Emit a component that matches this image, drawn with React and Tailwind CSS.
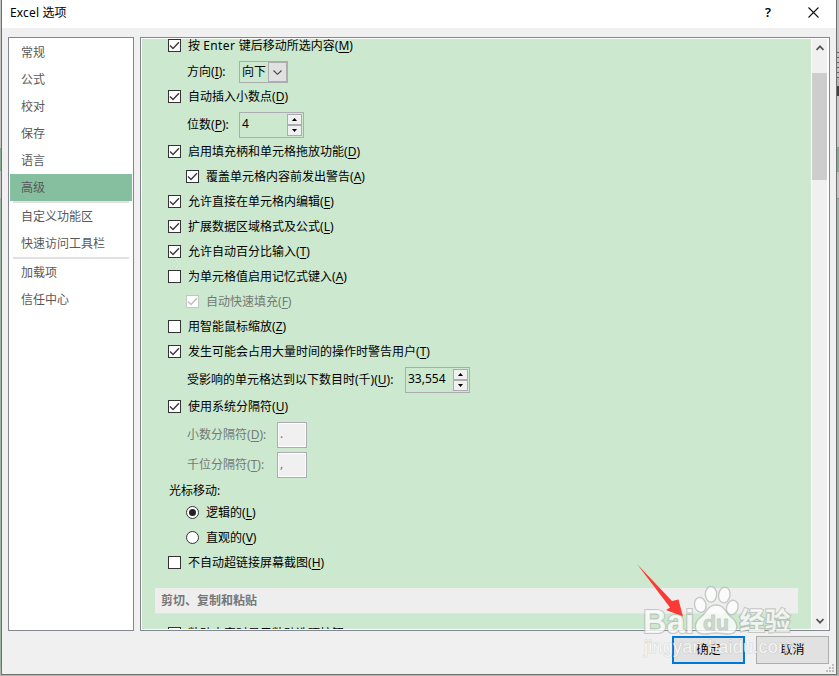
import React, { useState } from 'react';

const navItems = [
    { id: 'general', label: '常规' },
    { id: 'formulas', label: '公式' },
    { id: 'proofing', label: '校对' },
    { id: 'save', label: '保存' },
    { id: 'language', label: '语言' },
    { id: 'advanced', label: '高级' },
    { id: 'div' },
    { id: 'ribbon', label: '自定义功能区' },
    { id: 'qat', label: '快速访问工具栏' },
    { id: 'div' },
    { id: 'addins', label: '加载项' },
    { id: 'trust', label: '信任中心' },
];

// label text followed by its underlined access key, e.g. 方向(I):
function Label({ text, hot, tail = '' }) {
    return (
        <span className="whitespace-pre">
            {text}({<span className="underline underline-offset-2">{hot}</span>}){tail}
        </span>
    );
}

function Check({ text, hot, on = true, indent, disabled }) {
    const [checked, setChecked] = useState(on);
    return (
        <div className={`flex h-[25px] shrink-0 items-center gap-[7px] ${indent ? 'pl-[44px]' : 'pl-[26px]'} ${disabled ? 'text-[#737a74]' : ''}`}>
            <button
                disabled={disabled}
                onClick={() => setChecked(!checked)}
                className={`h-[13px] w-[13px] shrink-0 border bg-white ${disabled ? 'border-[#c4c8c4]' : 'border-[#333]'}`}
            >
                {checked && (
                    <svg viewBox="0 0 11 11" className="block h-[11px] w-[11px]" fill="none" stroke={disabled ? '#bdbdbd' : '#3a3a3a'} strokeWidth="1.4">
                        <path d="M1 5.6 L4 8.5 L10 2.2" />
                    </svg>
                )}
            </button>
            <Label text={text} hot={hot} />
        </div>
    );
}

function Radio({ text, hot, on }) {
    return (
        <div className="flex h-[25px] shrink-0 items-center gap-[7px] pl-[44px]">
            <span className="flex h-[13px] w-[13px] items-center justify-center rounded-full border border-[#333] bg-white">
                {on && <span className="h-[7px] w-[7px] rounded-full bg-[#222]" />}
            </span>
            <Label text={text} hot={hot} />
        </div>
    );
}

function Spin({ value }) {
    return (
        <div className="flex h-[26px] w-[65px] border border-[#abadb3] p-px">
            <span className="flex-1 pl-px leading-[20px]">{value}</span>
            <span className="flex w-[15px] flex-col bg-[#f0f0f0]">
                <span className="flex flex-1 items-center justify-center border border-[#acacac]">
                    <svg viewBox="0 0 5 3" className="h-[3px] w-[5px]"><path d="M2.5 0 L5 3 H0 Z" /></svg>
                </span>
                <span className="flex flex-1 items-center justify-center border border-[#acacac]">
                    <svg viewBox="0 0 5 3" className="h-[3px] w-[5px]"><path d="M0 0 H5 L2.5 3 Z" /></svg>
                </span>
            </span>
        </div>
    );
}

function Separator({ text, hot, value }) {
    return (
        <div className="flex h-[30px] shrink-0 pt-[3px] pl-[45px] text-[#737a74]">
            <span className="w-[90px] leading-[26px]"><Label text={text} hot={hot} tail=":" /></span>
            <span className="h-[26px] w-[30px] border border-[#abadb3] bg-white p-px">
                <span className="block h-full bg-[#f0f0f0] pl-px leading-[20px]">{value}</span>
            </span>
        </div>
    );
}

function Watermark() {
    return (
        <svg viewBox="0 0 219 126" className="pointer-events-none absolute top-[550px] left-[620px] h-[126px] w-[219px]">
            <path d="M17 14 L52 51 L58.500 49.500 L63 66.500 L46 60 L50 57.500 Z" fill="#fb3a36" />
            <g fill="#fff" fillOpacity="0.75" stroke="#a9aea9" strokeOpacity="0.6" strokeWidth="1.4">
                <ellipse cx="80.3" cy="55" rx="5.7" ry="7.5" transform="rotate(-14 80 55)" />
                <ellipse cx="91" cy="44.3" rx="5.7" ry="7.8" />
                <ellipse cx="104.3" cy="45" rx="5.7" ry="7.8" transform="rotate(10 104.3 45)" />
                <ellipse cx="112.3" cy="57.5" rx="5.7" ry="7.3" transform="rotate(18 112.3 57.5)" />
                <path d="M96 55 C87 55 87 63 81 67 C73 73 73 83.500 84 84 C89 84 91 83 96 83 C101 83 104 84 109 84 C119 83.500 119 73 111 67 C105 63 105 55 96 55 Z" />
            </g>
            <g fontFamily='"Liberation Sans", sans-serif' fontWeight="bold" fill="#fff" fillOpacity="0.8" stroke="#a9aea9" strokeOpacity="0.6" strokeWidth="2.2" paintOrder="stroke">
                <text x="23" y="83" fontSize="34" textLength="51" lengthAdjust="spacingAndGlyphs">Bai</text>
                <text x="83" y="80" fontSize="21" fill="#c3d2c5" strokeWidth="1" textLength="26" lengthAdjust="spacingAndGlyphs">du</text>
                <text x="119.5" y="80" fontSize="25.5" fontFamily='"Noto Sans CJK SC", sans-serif'>经验</text>
            </g>
            <text x="24" y="103" fontSize="18" fontFamily='"Liberation Sans", sans-serif' fill="#fff" fillOpacity="0.75" stroke="#aaa" strokeOpacity="0.35" strokeWidth="1.2" paintOrder="stroke" textLength="149">
                jingyan.baidu.com
            </text>
        </svg>
    );
}

export default function App() {
    const [active, setActive] = useState('advanced');

    return (
        <div className='relative flex h-[676px] w-[839px] overflow-hidden bg-[#b4b6b4] font-["Noto_Sans","Noto_Sans_CJK_SC",sans-serif] text-[12px] text-black'>
            <div className="flex w-px shrink-0 flex-col">
                <div className="h-[148px] bg-[#c4c4c4]" />
                <div className="h-[23px] bg-[#8ba890]" />
                <div className="h-[27px] bg-[#c4c4c4]" />
                <div className="h-[470px] bg-[#9fb5a2]" />
            </div>
            <div className="flex h-[675px] w-[836px] shrink-0 flex-col border-x border-b border-[#707070] bg-[#f0f0f0]">
                <header className="flex h-[28px] shrink-0 items-center bg-white pl-[8px]">
                    <span className="-mt-[3px] flex-1 tracking-[0.15px]">Excel 选项</span>
                    <span className="-mt-[3px] mr-[37px] text-[13px] font-semibold">?</span>
                    <svg viewBox="0 0 11 11" className="mr-[17px] -mt-[3px] h-[11px] w-[11px]" stroke="#111" strokeWidth="1.1">
                        <path d="M0.5 0.5 L10.5 10.5 M10.5 0.5 L0.5 10.5" />
                    </svg>
                </header>
                <main className="mt-[9px] flex h-[594px] shrink-0 gap-[6px] px-[6px]">
                    <nav className="flex w-[126px] flex-col border border-[#828790] bg-white p-px text-[#595959]">
                        {navItems.map((item, idx) => {
                            if (item.id === 'div') {
                                return <div key={idx} className="mx-[3px] h-[2px] shrink-0 bg-[#e1e1e1]" />;
                            }
                            return (
                                <button
                                    key={item.id}
                                    onClick={() => setActive(item.id)}
                                    className={`h-[27px] shrink-0 pl-[11px] text-left ${active === item.id ? 'bg-[#86bf9f]' : ''}`}
                                >
                                    {item.label}
                                </button>
                            );
                        })}
                    </nav>
                    <section className="flex w-[690px] border border-[#828790] bg-white p-px">
                        <div className="w-[669px] overflow-hidden bg-[#cce8cf]">
                            <div className="-mt-[6px] flex flex-col">
                                <Check text={<>按 <span className="tracking-[0.4px]">Enter </span>键后移动所选内容</>} hot="M" />
                                <div className="flex h-[26px] shrink-0 pt-[3px] pl-[45px]">
                                    <span className="w-[52px] leading-[22px]"><Label text="方向" hot="I" tail=":" /></span>
                                    <span className="flex h-[22px] w-[49px] border border-[#abadb3]">
                                        <span className="flex-1 pl-[2px] leading-[20px]">向下</span>
                                        <span className="flex w-[19px] items-center justify-center border border-[#adadad] bg-[#e1e1e1]">
                                            <svg viewBox="0 0 9 5" className="h-[5px] w-[9px]" fill="none" stroke="#444" strokeWidth="1.1"><path d="M0.5 0.5 L4.5 4.3 L8.5 0.5" /></svg>
                                        </span>
                                    </span>
                                </div>
                                <Check text="自动插入小数点" hot="D" />
                                <div className="flex h-[30px] shrink-0 pt-[3px] pl-[45px]">
                                    <span className="w-[52px] leading-[26px]"><Label text="位数" hot="P" tail=":" /></span>
                                    <Spin value="4" />
                                </div>
                                <Check text="启用填充柄和单元格拖放功能" hot="D" />
                                <Check text="覆盖单元格内容前发出警告" hot="A" indent />
                                <Check text="允许直接在单元格内编辑" hot="E" />
                                <Check text="扩展数据区域格式及公式" hot="L" />
                                <Check text="允许自动百分比输入" hot="T" />
                                <Check text="为单元格值启用记忆式键入" hot="A" on={false} />
                                <Check text="自动快速填充" hot="F" indent disabled />
                                <Check text="用智能鼠标缩放" hot="Z" on={false} />
                                <Check text="发生可能会占用大量时间的操作时警告用户" hot="T" />
                                <div className="flex h-[30px] shrink-0 pt-[3px] pl-[45px]">
                                    <span className="w-[218px] leading-[26px]"><Label text="受影响的单元格达到以下数目时(千)" hot="U" tail=":" /></span>
                                    <Spin value="33,554" />
                                </div>
                                <Check text="使用系统分隔符" hot="U" />
                                <Separator text="小数分隔符" hot="D" value="." />
                                <Separator text="千位分隔符" hot="T" value="," />
                                <div className="h-[21px] shrink-0 pl-[27px] leading-[24px]">光标移动:</div>
                                <Radio text="逻辑的" hot="L" on />
                                <Radio text="直观的" hot="V" />
                                <Check text="不自动超链接屏幕截图" hot="H" on={false} />
                                <h2 className="mt-[13px] mb-[7px] ml-[13px] h-[26px] w-[643px] shrink-0 border-b border-[#e2e6e2] bg-[#eee] pl-[6px] leading-[25px] font-bold text-[#777]">剪切、复制和粘贴</h2>
                                <Check text="粘贴内容时显示粘贴选项按钮" hot="S" on={false} />
                            </div>
                        </div>
                        <div className="ml-px flex w-[15px] flex-col items-center bg-[#f0f0f0]">
                            <svg viewBox="0 0 8 6" className="mt-[6px] h-[6px] w-[8px] shrink-0" fill="none" stroke="#555" strokeWidth="1.8"><path d="M0.5 5 L4 1.3 L7.5 5" /></svg>
                            <div className="mt-[22px] h-[107px] w-full shrink-0 bg-[#cdcdcd]" />
                            <svg viewBox="0 0 8 6" className="mt-auto mb-[5px] h-[6px] w-[8px] shrink-0" fill="none" stroke="#555" strokeWidth="1.8"><path d="M0.5 1 L4 4.7 L7.5 1" /></svg>
                        </div>
                    </section>
                </main>
                <footer className="mt-[5px] flex justify-end gap-[11px] pr-[7px]">
                    <button className="h-[28px] w-[73px] border-2 border-[#0078d7] bg-[#e1e1e1]">确定</button>
                    <button className="h-[28px] w-[73px] border border-[#adadad] bg-[#e1e1e1]">取消</button>
                </footer>
                <svg viewBox="0 0 8 8" className="mr-[2px] ml-auto h-[8px] w-[8px]" fill="#bfbfbf">
                    <path d="M6 0h2v2h-2z M3 3h2v2h-2z M6 3h2v2h-2z M0 6h2v2h-2z M3 6h2v2h-2z M6 6h2v2h-2z" />
                </svg>
            </div>
            {/* sliver of the worksheet window behind the dialog */}
            <div className="flex flex-1 flex-col">
                <div className="h-[52px] bg-[#c4c4c4]" />
                <div className="flex h-[26px] flex-col justify-between bg-[#c4c4c4]">
                    <div className="h-px bg-[#666]" />
                    <div className="h-px bg-[#4a6f96]" />
                    <div className="h-px bg-[#666]" />
                    <div className="h-px bg-[#4a6f96]" />
                    <div className="h-px bg-[#666]" />
                    <div className="h-px bg-[#4a6f96]" />
                </div>
                <div className="mt-[8px] h-[10px] bg-[#444]" />
                <div className="h-[52px] border-b border-[#999] bg-[#c4c4c4]" />
                <div className="h-[23px] bg-[#8ba890]" />
                <div className="h-[28px] border-y border-[#999] bg-[#c4c4c4]" />
                <div className="h-[476px] bg-[#9fb5a2]" />
            </div>
            <Watermark />
        </div>
    );
}
